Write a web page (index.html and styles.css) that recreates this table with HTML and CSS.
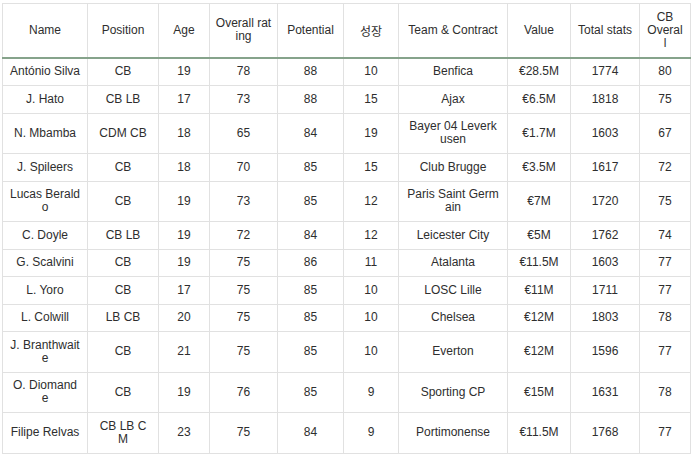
FILE: index.html
```html
<!DOCTYPE html>
<html>
<head>
<meta charset="utf-8">
<link rel="stylesheet" href="styles.css">
</head>
<body>
<table class="players">
  <colgroup>
    <col class="c-name"><col class="c-pos"><col class="c-age"><col class="c-ovr"><col class="c-pot">
    <col class="c-grow"><col class="c-team"><col class="c-val"><col class="c-tot"><col class="c-cb">
  </colgroup>
  <thead>
    <tr>
      <th>Name</th><th>Position</th><th>Age</th><th>Overall rat<br>ing</th><th>Potential</th>
      <th class="kr">성장</th><th>Team &amp; Contract</th><th>Value</th><th>Total stats</th><th>CB<br>Overal<br>l</th>
    </tr>
  </thead>
  <tbody>
    <tr><td>António Silva</td><td>CB</td><td>19</td><td>78</td><td>88</td><td>10</td><td>Benfica</td><td>€28.5M</td><td>1774</td><td>80</td></tr>
    <tr><td>J. Hato</td><td>CB LB</td><td>17</td><td>73</td><td>88</td><td>15</td><td>Ajax</td><td>€6.5M</td><td>1818</td><td>75</td></tr>
    <tr><td>N. Mbamba</td><td>CDM CB</td><td>18</td><td>65</td><td>84</td><td>19</td><td>Bayer 04 Leverk<br>usen</td><td>€1.7M</td><td>1603</td><td>67</td></tr>
    <tr><td>J. Spileers</td><td>CB</td><td>18</td><td>70</td><td>85</td><td>15</td><td>Club Brugge</td><td>€3.5M</td><td>1617</td><td>72</td></tr>
    <tr><td>Lucas Berald<br>o</td><td>CB</td><td>19</td><td>73</td><td>85</td><td>12</td><td>Paris Saint Germ<br>ain</td><td>€7M</td><td>1720</td><td>75</td></tr>
    <tr><td>C. Doyle</td><td>CB LB</td><td>19</td><td>72</td><td>84</td><td>12</td><td>Leicester City</td><td>€5M</td><td>1762</td><td>74</td></tr>
    <tr><td>G. Scalvini</td><td>CB</td><td>19</td><td>75</td><td>86</td><td>11</td><td>Atalanta</td><td>€11.5M</td><td>1603</td><td>77</td></tr>
    <tr><td>L. Yoro</td><td>CB</td><td>17</td><td>75</td><td>85</td><td>10</td><td>LOSC Lille</td><td>€11M</td><td>1711</td><td>77</td></tr>
    <tr><td>L. Colwill</td><td>LB CB</td><td>20</td><td>75</td><td>85</td><td>10</td><td>Chelsea</td><td>€12M</td><td>1803</td><td>78</td></tr>
    <tr><td>J. Branthwait<br>e</td><td>CB</td><td>21</td><td>75</td><td>85</td><td>10</td><td>Everton</td><td>€12M</td><td>1596</td><td>77</td></tr>
    <tr><td>O. Diomand<br>e</td><td>CB</td><td>19</td><td>76</td><td>85</td><td>9</td><td>Sporting CP</td><td>€15M</td><td>1631</td><td>78</td></tr>
    <tr><td>Filipe Relvas</td><td>CB LB C<br>M</td><td>23</td><td>75</td><td>84</td><td>9</td><td>Portimonense</td><td>€11.5M</td><td>1768</td><td>77</td></tr>
  </tbody>
</table>
</body>
</html>
```

FILE: styles.css
```css
html, body {
  background: #ffffff;
}
body {
  margin: 3px 0 0 2px;
  font-family: "Liberation Sans", Arial, "Noto Sans CJK KR", sans-serif;
  font-size: 12px;
  color: #2e2e2e;
}
.players {
  border-collapse: collapse;
  table-layout: fixed;
  width: 688px;
}
.c-name { width: 85px; }
.c-pos { width: 71px; }
.c-age { width: 51px; }
.c-ovr { width: 68px; }
.c-pot { width: 66px; }
.c-grow { width: 55px; }
.c-team { width: 109px; }
.c-val { width: 63px; }
.c-tot { width: 69px; }
.c-cb { width: 51px; }
.players th,
.players td {
  border: 1px solid #e1e1e1;
  padding: 6.75px 2px;
  line-height: 13px;
  text-align: center;
  vertical-align: middle;
  white-space: nowrap;
  font-weight: normal;
}
.players th {
  border-bottom: 2px solid #86a38b;
}
.kr {
  font-family: "Noto Sans CJK KR", sans-serif;
}
```
